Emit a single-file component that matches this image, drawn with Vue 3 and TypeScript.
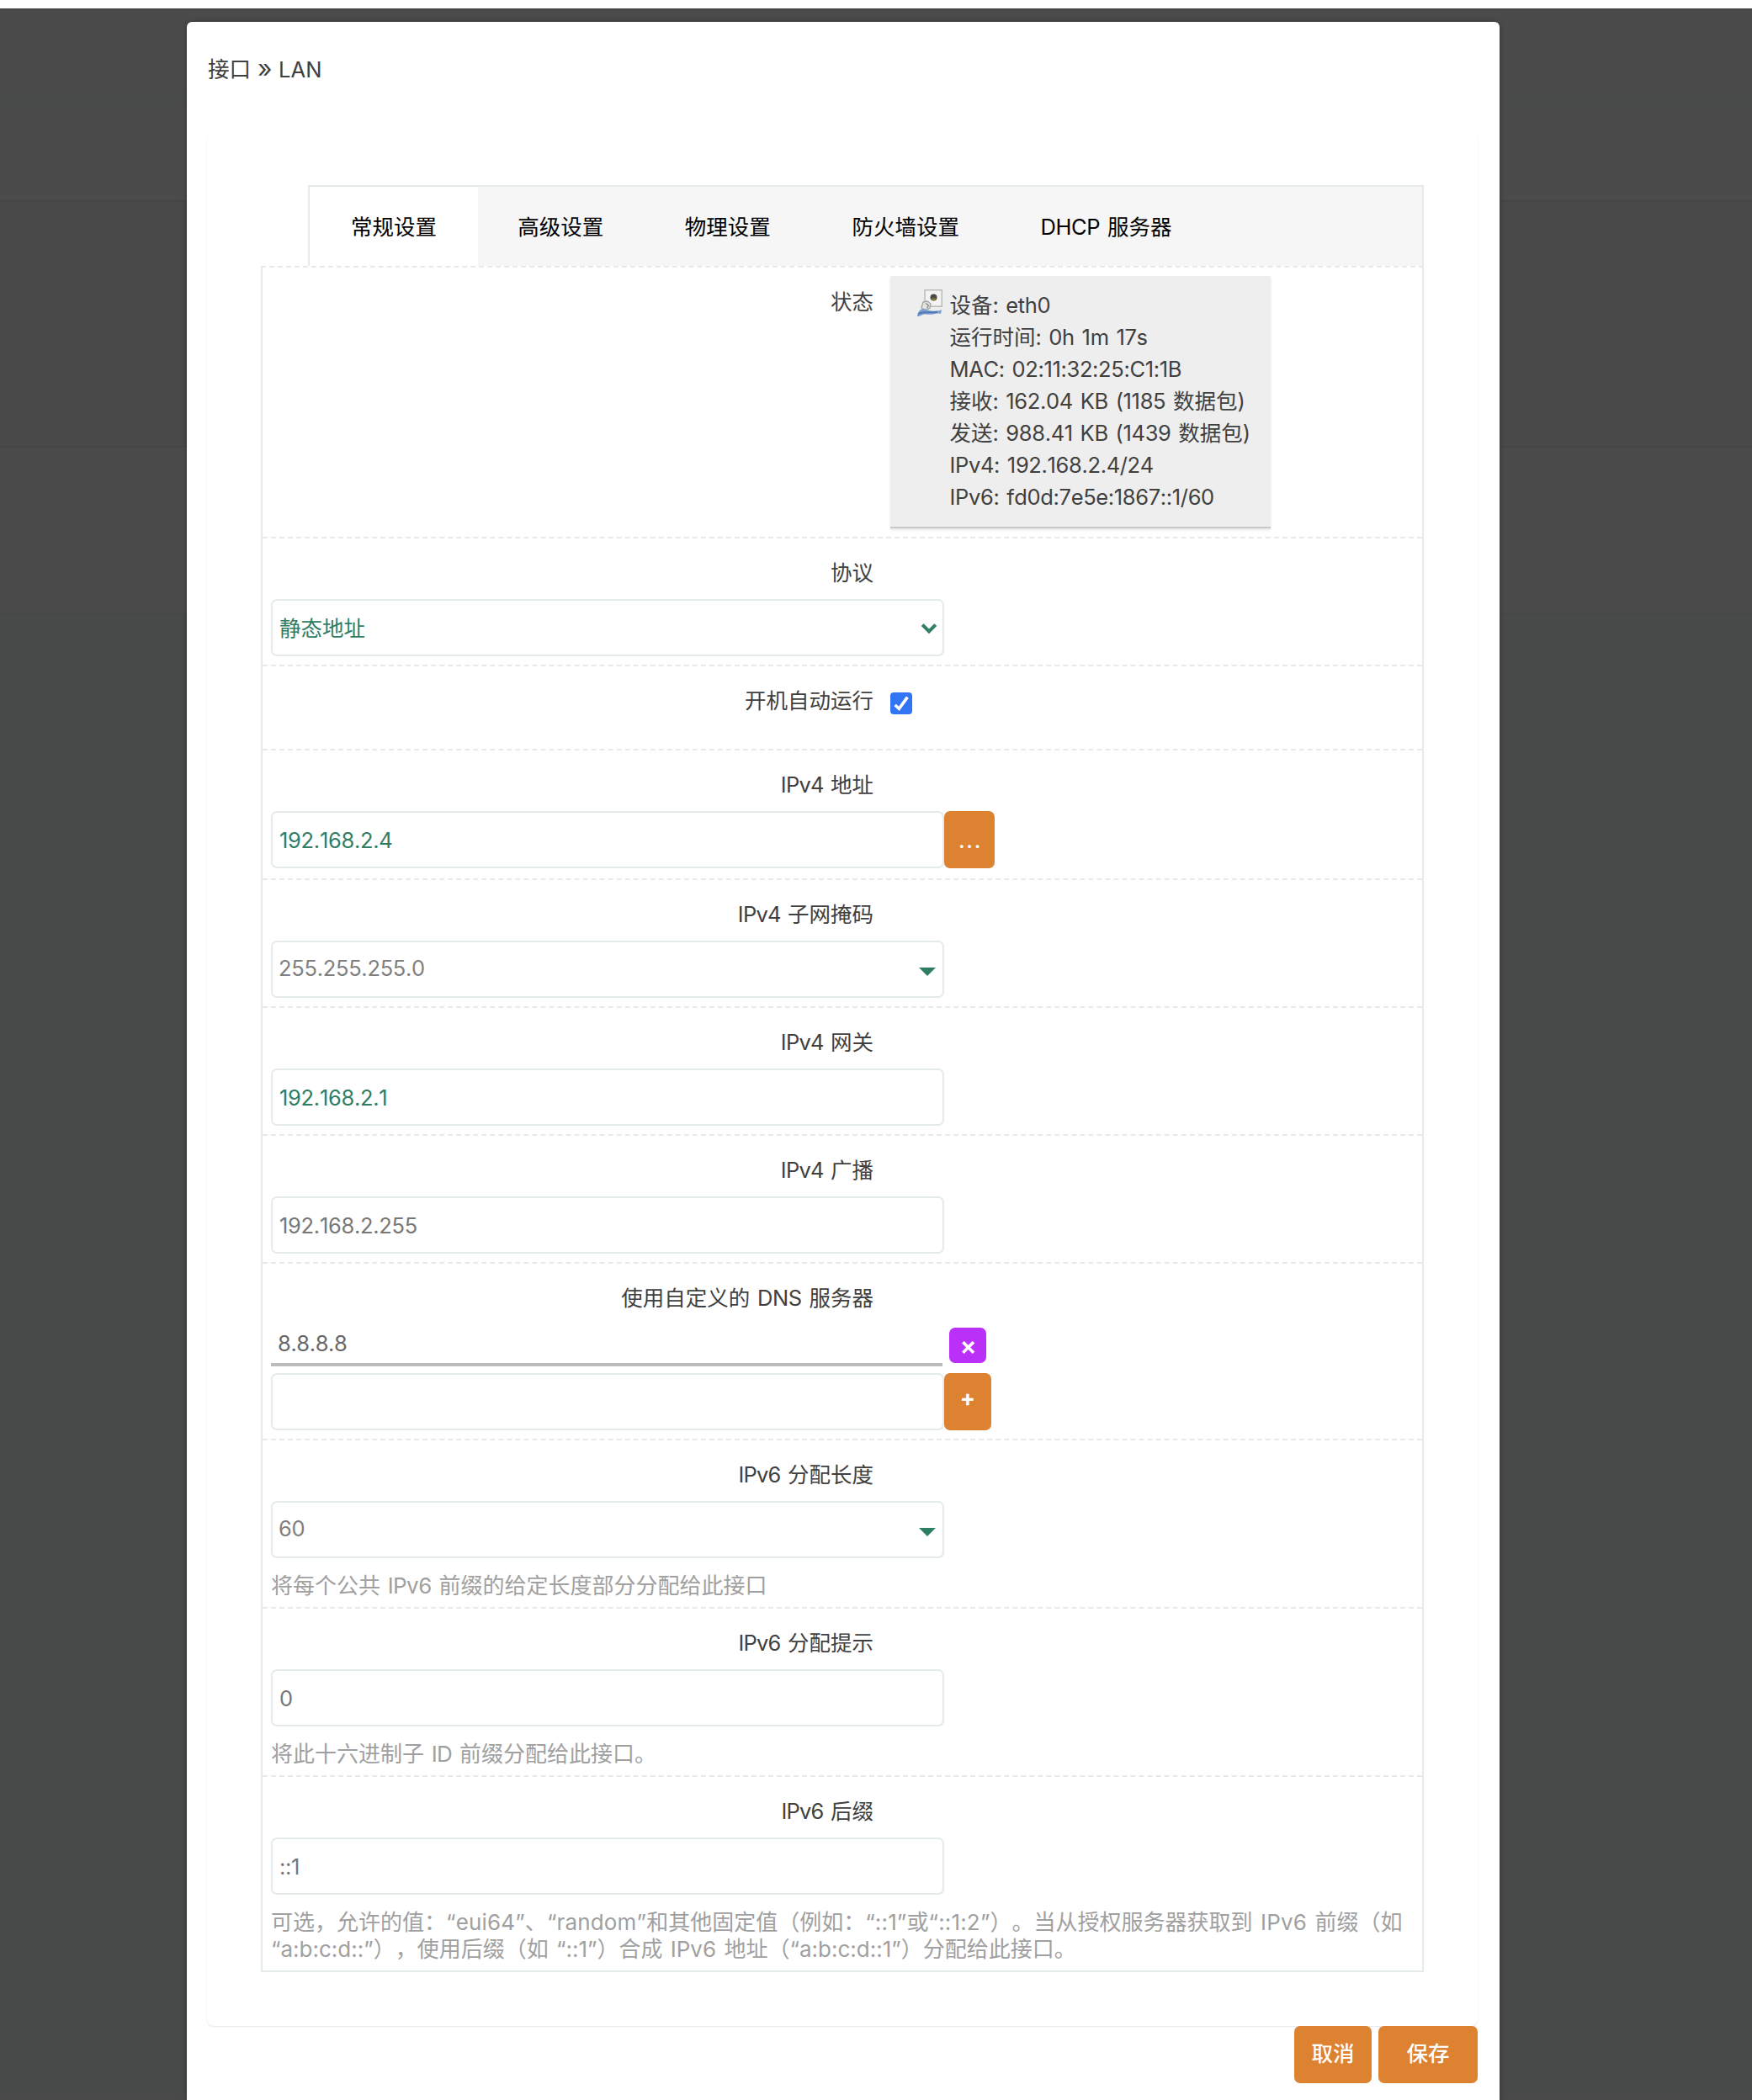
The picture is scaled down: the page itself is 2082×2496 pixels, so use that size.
<script setup lang="ts">
import { h, ref } from 'vue'
import type { FunctionalComponent } from 'vue'

/* Splits a string into CJK and Latin runs so that Latin text can be tracked separately. */
const Mixed: FunctionalComponent<{ text: string; track?: number }> = (props) =>
  h(
    'span',
    { style: { whiteSpace: 'pre' } },
    (props.text.match(/[\u0020-\u00ff\u2018-\u201d]+|[^\u0020-\u00ff\u2018-\u201d]+/g) ?? []).map((run) =>
      /^[\u0020-\u00ff\u2018-\u201d]/.test(run)
        ? h('span', { style: { letterSpacing: `${props.track ?? -0.4}px` } }, run)
        : run,
    ),
  )
Mixed.props = ['text', 'track']

const tabs = ['常规设置', '高级设置', '物理设置', '防火墙设置', 'DHCP 服务器']
const active = ref(0)

const status = [
  '设备: eth0',
  '运行时间: 0h 1m 17s',
  'MAC: 02:11:32:25:C1:1B',
  '接收: 162.04 KB (1185 数据包)',
  '发送: 988.41 KB (1439 数据包)',
  'IPv4: 192.168.2.4/24',
  'IPv6: fd0d:7e5e:1867::1/60',
]

interface Field {
  label: string
  value: string
  kind: 'select' | 'input' | 'combo' | 'check' | 'list'
  muted?: boolean
  more?: boolean
  hint?: string[]
}

const fields: Field[] = [
  { label: '协议', value: '静态地址', kind: 'select' },
  { label: '开机自动运行', value: '', kind: 'check' },
  { label: 'IPv4 地址', value: '192.168.2.4', kind: 'input', more: true },
  { label: 'IPv4 子网掩码', value: '255.255.255.0', kind: 'combo' },
  { label: 'IPv4 网关', value: '192.168.2.1', kind: 'input' },
  { label: 'IPv4 广播', value: '192.168.2.255', kind: 'input', muted: true },
  { label: '使用自定义的 DNS 服务器', value: '8.8.8.8', kind: 'list' },
  { label: 'IPv6 分配长度', value: '60', kind: 'combo', hint: ['将每个公共 IPv6 前缀的给定长度部分分配给此接口'] },
  { label: 'IPv6 分配提示', value: '0', kind: 'input', muted: true, hint: ['将此十六进制子 ID 前缀分配给此接口。'] },
  {
    label: 'IPv6 后缀',
    value: '::1',
    kind: 'input',
    muted: true,
    hint: [
      '可选，允许的值：“eui64”、“random”和其他固定值（例如：“::1”或“::1:2”）。当从授权服务器获取到 IPv6 前缀（如',
      '“a:b:c:d::”），使用后缀（如 “::1”）合成 IPv6 地址（“a:b:c:d::1”）分配给此接口。',
    ],
  },
]

const hintTrack = (line: string) => (line.startsWith('可选') ? 0.17 : line.includes('“') ? 0 : -0.6)
</script>

<template>
  <div class="page">
    <div class="modal">
      <h4 class="title">接口 <span class="sep">»</span> LAN</h4>
      <div class="card">
        <ul class="tabs">
          <li v-for="(t, i) in tabs" :key="t" :class="{ active: i === active }" @click="active = i">
            <Mixed :text="t" />
          </li>
        </ul>
        <div class="panel">
          <div class="row status-row">
            <label class="label">状态</label>
            <div class="status">
              <svg class="eth" width="30" height="32" viewBox="0 0 30 32">
                <rect x="9" y="0.7" width="20.3" height="19.6" fill="#eeeeec" stroke="#babdb6" stroke-width="1.4" />
                <rect x="10.8" y="2.6" width="16.6" height="15.6" fill="#f4f4f2" />
                <circle cx="19.5" cy="9.5" r="4" fill="#4b4b44" />
                <path d="M16.6 10.4h5.8l-1.2 2.4h-3.4z" fill="#8d8430" />
                <path d="M7 15l5 -1 4 3 -1 5 -5 3 -5 -3z" fill="#e4e4e2" stroke="#a3a5a0" stroke-width="1.3" />
                <path d="M10 16.5l3.5 2.5 -2 3.5" fill="none" stroke="#858783" stroke-width="1.3" />
                <path d="M0 30.5C2 24 6 22 10 23.5C14 25.5 20 27 29 24.2L28 29C24 27 18 31 10 29.5C7 29 5 31 2 32L0 32z" fill="#7f9fd0" />
                <path d="M1.5 29C6 25 15 29 24 26.5" fill="none" stroke="#4f79b8" stroke-width="2" />
              </svg>
              <div class="lines">
                <div v-for="s in status" :key="s"><Mixed :text="s" :track="-0.35" /></div>
              </div>
            </div>
          </div>

          <div v-for="f in fields" :key="f.label" class="row" :class="f.kind">
            <label class="label"><Mixed :text="f.label" :track="f.label.startsWith('IPv') ? -0.8 : -0.4" /></label>
            <span v-if="f.kind === 'check'" class="check">
              <svg width="26" height="26" viewBox="0 0 26 26">
                <path d="M5.6 15L10.4 19.4L20.4 5.6" fill="none" stroke="#fff" stroke-width="3.6" />
              </svg>
            </span>
            <template v-else-if="f.kind === 'list'">
              <div class="line">
                <div class="item"><Mixed :text="f.value" /></div>
                <button class="btn del">×</button>
              </div>
              <div class="line add">
                <div class="field"></div>
                <button class="btn plus">+</button>
              </div>
            </template>
            <div v-else class="line" :class="{ wide: f.more }">
              <div class="field" :class="{ muted: f.muted }">
                <Mixed :text="f.value" :track="-0.3" />
                <svg v-if="f.kind === 'select'" class="chev" width="20" height="14" viewBox="0 0 20 14">
                  <path d="M2.2 2.6L10 10.4L17.8 2.6" fill="none" stroke="#2f7d62" stroke-width="4" />
                </svg>
                <svg v-if="f.kind === 'combo'" class="caret" width="20" height="10" viewBox="0 0 20 10">
                  <path d="M0 0H20L10 10z" fill="#2f7d62" />
                </svg>
              </div>
              <button v-if="f.more" class="btn more">...</button>
            </div>
            <div v-if="f.hint" class="hint">
              <div v-for="l in f.hint" :key="l"><Mixed :text="l" :track="hintTrack(l)" /></div>
            </div>
          </div>
        </div>
      </div>
      <div class="actions">
        <button class="btn cancel">取消</button>
        <button class="btn save">保存</button>
      </div>
    </div>
  </div>
</template>

<style>
body {
  background: #fff;
  overflow: hidden;
}
</style>

<style scoped>
.page {
  box-sizing: border-box;
  width: 2082px;
  height: 2496px;
  overflow: hidden;
  padding-top: 26px;
  background: linear-gradient(
    #fff 0 10px, #454747 10px 12px, #4b4b4b 12px 107px, #494c4a 107px 126px, #4b4b4b 126px 238px,
    #464646 238px 240px, #494949 240px 530px, #464646 530px 532px, #4b4b4b 532px 728px,
    #464747 728px 730px, #484a49 730px 2490px, #4a4a4a 2490px
  );
  font: 25.5px/38px Inter, 'Noto Sans CJK SC', sans-serif;
  font-kerning: none;
  font-feature-settings: 'calt' 0;
  text-spacing-trim: space-all;
  word-spacing: 2px;
  color: #404040;
}
.modal {
  box-sizing: border-box;
  width: 1560px;
  height: 2520px;
  margin-left: 222px;
  padding: 0 26px 0 24px;
  border-radius: 6px;
  background: #fff;
  box-shadow: 0 0 6px rgba(0, 0, 0, 0.3);
}
.title {
  margin: 0;
  height: 134px;
  padding-left: 1px;
  line-height: 114px;
  font-size: 25.6px;
  font-weight: 400;
  word-spacing: 0.5px;
}
.sep {
  font-size: 30px;
  line-height: 1;
}
.card {
  box-sizing: border-box;
  height: 2248px;
  padding: 60px 64px 0;
  border-radius: 8px;
  box-shadow: 0 1px 2px rgba(0, 0, 0, 0.1);
}
.tabs {
  display: flex;
  box-sizing: border-box;
  height: 96px;
  margin: 0 0 0 56px;
  padding: 0;
  list-style: none;
  border: 2px solid #e5eaec;
  border-bottom: 0;
  background: #f6f6f6;
  line-height: 96px;
  color: #000;
}
.tabs li {
  padding: 0 48.3px;
}
.tabs li.active {
  height: 94px;
  padding: 0 48.7px 0 49.1px;
  background: #fff;
}
.tabs li.active + li {
  padding-left: 47.4px;
}
.panel {
  box-sizing: border-box;
  height: 2028px;
  border: 2px solid #e5eaec;
  border-top-style: dashed;
}
.row {
  box-sizing: border-box;
  padding: 0 10px 10px;
  border-bottom: 2px dashed #e5eaec;
}
.row:last-child {
  border-bottom: 0;
}
.label {
  display: block;
  box-sizing: border-box;
  width: 716px;
  height: 72px;
  padding-top: 10px;
  line-height: 62px;
  text-align: right;
}
.status-row {
  display: flex;
  height: 322px;
}
.status {
  display: flex;
  box-sizing: border-box;
  width: 452px;
  height: 300px;
  margin: 10px 0 0 20px;
  padding: 16px 0 0 32px;
  border-bottom: 2px solid #c8c8c8;
  background: #eee;
  box-shadow: 0 2px 3px rgba(0, 0, 0, 0.1);
}
.lines {
  margin-left: 8.5px;
}
.eth {
  flex: none;
}
.check.row {
  display: flex;
  height: 100px;
}
span.check {
  width: 26px;
  height: 26px;
  margin: 31px 0 0 20px;
  border-radius: 4px;
  background: #3175f5;
}
.check svg {
  display: block;
}
.line {
  display: flex;
}
.line.wide {
  margin-bottom: 2px;
}
.field {
  position: relative;
  box-sizing: border-box;
  width: 800px;
  height: 68px;
  padding-left: 8px;
  border: 2px solid #e5eaec;
  border-radius: 7px;
  line-height: 65px;
  color: #2f7d62;
}
.field.muted {
  color: #777;
}
.combo .field {
  padding-left: 7px;
  line-height: 62px;
  color: #808080;
}
.chev {
  position: absolute;
  right: 6px;
  top: 26px;
}
.caret {
  position: absolute;
  right: 8px;
  top: 30px;
}
.item {
  box-sizing: border-box;
  width: 798px;
  height: 50px;
  padding-left: 8px;
  border-bottom: 4px solid #bbb;
  line-height: 46px;
  color: #666;
}
.add {
  margin-top: 8px;
}
.btn {
  box-sizing: border-box;
  height: 68px;
  padding: 0;
  border: 0;
  border-radius: 7px;
  background: #dd8231;
  color: #fff;
  font: inherit;
  text-align: center;
}
.more {
  width: 60px;
  padding: 1px 0 0 2px;
  font-weight: 500;
  letter-spacing: 1.6px;
}
.del {
  width: 44px;
  height: 42px;
  margin: 4px 0 0 8px;
  padding-left: 1px;
  background: #ba30f8;
  font-size: 30px;
  font-weight: 600;
}
.plus {
  width: 56px;
  padding-bottom: 9px;
  font-size: 27px;
  font-weight: 700;
}
.hint {
  margin-top: 16px;
  height: 32px;
  font-size: 26px;
  line-height: 32px;
  color: #a0a0a0;
}
.hint > div {
  position: relative;
  top: 1px;
}
.row:last-child .hint {
  height: 64px;
}
.actions {
  display: flex;
  justify-content: flex-end;
  gap: 8px;
}
.cancel,
.save {
  padding-bottom: 2px;
  font-weight: 500;
}
.cancel {
  width: 92px;
}
.save {
  width: 118px;
}
</style>
